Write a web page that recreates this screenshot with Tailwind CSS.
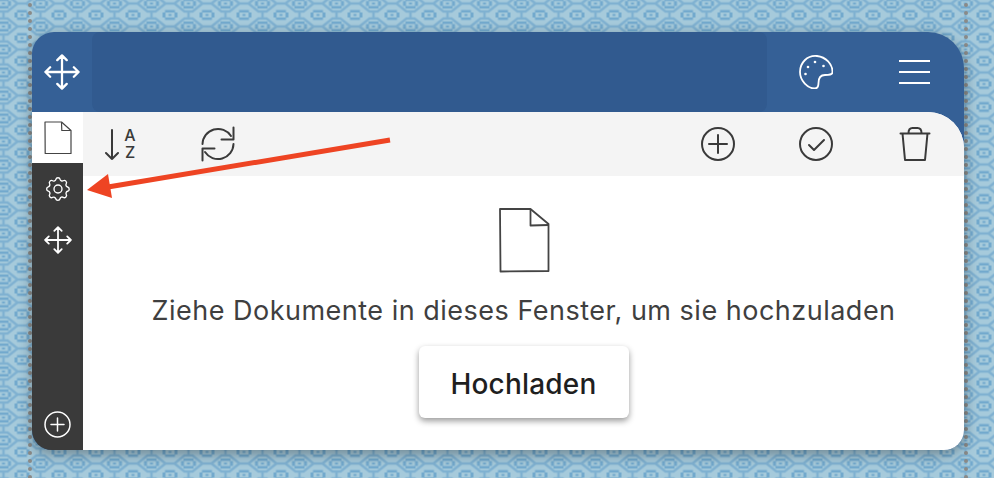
<!DOCTYPE html>
<html>
<head>
  <meta charset="UTF-8" />
  <title>Dokumente</title>
  <script src="https://cdn.jsdelivr.net/npm/@tailwindcss/browser@4"></script>
</head>
<body class="bg-[#a6cadb] font-['Inter',sans-serif] overflow-hidden">
  <div class="relative w-[994px] h-[478px] overflow-hidden pt-8 px-8">
    <!-- wallpaper -->
    <svg class="absolute inset-0" width="994" height="478">
      <defs>
        <g id="motif" fill="#72a9cd">
          <path d="M-5 -5h10v2.500h-10zM-5 2.500h10v2.500h-10zM-7.500 -2.500h3v5h-3zM4.500 -2.500h3v5h-3z" />
          <path d="M-1.500 -1h3v2h-3z" />
        </g>
        <pattern id="tile" width="37" height="23" patternUnits="userSpaceOnUse" patternTransform="translate(3.500 3.500)">
          <path d="M0 8h4L14 0h9L33 8h4M0 15h4L14 23h9L33 15h4M0 8v7M37 8v7" fill="none" stroke="#7fb1d1" stroke-width="2.500" />
          <use href="#motif" x="18.500" y="11.500" />
          <use href="#motif" x="0" y="0" />
          <use href="#motif" x="37" y="0" />
          <use href="#motif" x="0" y="23" />
          <use href="#motif" x="37" y="23" />
        </pattern>
      </defs>
      <rect width="994" height="478" fill="url(#tile)" />
      <line x1="30" y1="5" x2="30" y2="478" stroke="#8a8a88" stroke-width="4" stroke-linecap="round" stroke-dasharray="0 8" />
      <line x1="966" y1="5" x2="966" y2="478" stroke="#8a8a88" stroke-width="4" stroke-linecap="round" stroke-dasharray="0 8" />
    </svg>

    <!-- window -->
    <div class="relative w-[932px] h-[418px] rounded-tl-[22px] rounded-tr-[36px] rounded-br-[20px] rounded-bl-[20px] overflow-hidden bg-[#356096] shadow-[0_4px_14px_rgba(0,0,0,0.35)] flex flex-col">
      <!-- title bar -->
      <div class="h-20 flex items-stretch shrink-0">
        <div class="w-[60px] flex items-center justify-center">
          <svg width="36" height="36" viewBox="0 0 38 38" fill="none" stroke="#fff" stroke-width="2.400" stroke-linecap="round" stroke-linejoin="round">
            <path d="M19 1.500v35M1.500 19h35M14 6.500l5-5 5 5M14 31.500l5 5 5-5M6.500 14l-5 5 5 5M31.500 14l5 5-5 5" />
          </svg>
        </div>
        <div class="w-[675px] bg-[#315a8f] rounded-lg"></div>
        <div class="flex-1 flex items-center">
          <svg class="ml-8" width="34" height="34" viewBox="0 0 34 34" fill="none">
            <path d="M18 1C8 0 1 8 1 17C1 26 9 33.500 15.500 33.500C19 33.500 19.500 31 19.500 28C19.500 22.500 22 20 26 20C30 20 33.500 20 33.500 17C33.500 9 27 2 18 1Z" stroke="#fff" stroke-width="1.800" />
            <circle cx="16" cy="7" r="1.300" fill="#fff" />
            <circle cx="24.500" cy="11" r="1.300" fill="#fff" />
            <circle cx="9" cy="12" r="1.300" fill="#fff" />
            <circle cx="6.500" cy="19" r="1.300" fill="#fff" />
          </svg>
          <div class="ml-[66px] w-[31px] h-6 flex flex-col justify-between">
            <div class="h-0.5 bg-white"></div>
            <div class="h-0.5 bg-white"></div>
            <div class="h-0.5 bg-white"></div>
          </div>
        </div>
      </div>

      <!-- body -->
      <div class="flex-1 flex min-h-0">
        <!-- side rail -->
        <div class="w-[51px] bg-[#3a3a3a] flex flex-col items-center shrink-0">
          <div class="w-full h-[51px] bg-white flex items-center justify-center">
            <svg width="28" height="33" viewBox="0 0 28 33" fill="none" stroke="#444" stroke-width="1.200" stroke-linejoin="round">
              <path d="M1 1h16.500L27 9.500v23H1.200Z" />
              <path d="M17.500 1.300l.3 8.200h9" />
            </svg>
          </div>
          <svg class="mt-[11px]" width="30" height="30" viewBox="0 0 24 24" fill="none" stroke="#fff" stroke-width="1.100" stroke-linejoin="round">
            <path d="M10.300 2.800c.4-1.700 3-1.700 3.400 0 .3 1.100 1.500 1.600 2.500 1.100 1.500-.9 3.300.9 2.400 2.400-.6 1-.1 2.300 1.100 2.600 1.700.4 1.700 3 0 3.400-1.100.3-1.600 1.500-1.100 2.500.9 1.500-.9 3.300-2.400 2.400-1-.6-2.300-.1-2.600 1.100-.4 1.700-3 1.700-3.400 0-.3-1.100-1.500-1.600-2.500-1.100-1.500.9-3.300-.9-2.400-2.400.6-1 .1-2.300-1.100-2.600-1.700-.4-1.700-3 0-3.400 1.100-.3 1.600-1.500 1.100-2.500-.9-1.500.9-3.300 2.400-2.400 1 .6 2.300.1 2.600-1.100Z" transform="translate(0 1.500)" />
            <circle cx="12" cy="12" r="3.200" />
          </svg>
          <svg class="mt-[22px]" width="28" height="28" viewBox="0 0 38 38" fill="none" stroke="#fff" stroke-width="2.400" stroke-linecap="round" stroke-linejoin="round">
            <path d="M19 1.500v35M1.500 19h35M14 6.500l5-5 5 5M14 31.500l5 5 5-5M6.500 14l-5 5 5 5M31.500 14l5 5-5 5" />
          </svg>
          <svg class="mt-auto mb-3" width="27" height="27" viewBox="0 0 27 27" fill="none" stroke="#fff" stroke-width="1.500" stroke-linecap="round">
            <circle cx="13.500" cy="13.500" r="12.500" />
            <path d="M13.500 7v13M7 13.500h13" />
          </svg>
        </div>

        <!-- panel -->
        <div class="flex-1 bg-white rounded-tr-[36px] overflow-hidden flex flex-col min-w-0">
          <!-- toolbar -->
          <div class="h-16 bg-[#f4f4f4] flex items-center shrink-0 text-[#3a3a3a]">
            <div class="ml-[21px] w-[34px] flex items-center justify-between">
              <svg width="16" height="32" viewBox="0 0 16 32" fill="none" stroke="#3a3a3a" stroke-width="2" stroke-linecap="round" stroke-linejoin="round">
                <path d="M8 2v29M2 25l6 6 6-6" />
              </svg>
              <div class="w-3 flex flex-col items-center text-[16px] leading-[17px] font-medium mr-0.5">
                <span>A</span>
                <span>Z</span>
              </div>
            </div>
            <svg class="ml-[63px]" width="34" height="36" viewBox="0 0 34 36" fill="none" stroke="#3a3a3a" stroke-width="2" stroke-linecap="round" stroke-linejoin="round">
              <path d="M1.500 18A15.500 15.500 0 0 1 30 10M32.500 18A15.500 15.500 0 0 1 4 26" />
              <path d="M32.500 1.500v12h-12M1.500 34.500v-12h12" />
            </svg>
            <svg class="ml-auto" width="34" height="34" viewBox="0 0 34 34" fill="none" stroke="#3a3a3a" stroke-width="2" stroke-linecap="round">
              <circle cx="17" cy="17" r="16" />
              <path d="M17 8v18M8 17h18" />
            </svg>
            <svg class="ml-16" width="34" height="34" viewBox="0 0 34 34" fill="none" stroke="#3a3a3a" stroke-width="2" stroke-linecap="round" stroke-linejoin="round">
              <circle cx="17" cy="17" r="16" />
              <path d="M10 18l5 5 10-10" />
            </svg>
            <svg class="ml-[66px] mr-[33px]" width="32" height="36" viewBox="0 0 32 36" fill="none" stroke="#3a3a3a" stroke-width="2" stroke-linecap="round" stroke-linejoin="round">
              <path d="M1.500 7.500h29M3.500 7.500l2.500 26.500h20l2.500-26.500M9.500 7c0-4 2-5 4-5h5c2 0 4 1 4 5" />
            </svg>
          </div>

          <!-- empty state -->
          <div class="flex-1 flex flex-col items-center pt-[31px]">
            <svg width="52" height="66" viewBox="0 0 52 66" fill="none" stroke="#444" stroke-width="1.800" stroke-linejoin="round">
              <path d="M2 2h30.500L50.500 17v47L2.500 64.500Z" />
              <path d="M32.500 2v16.500L50.500 18" />
            </svg>
            <p class="mt-[23px] text-[27px] leading-[30px] text-[#3f3f3f] tracking-[0.5px] whitespace-nowrap">Ziehe Dokumente in dieses Fenster, um sie hochzuladen</p>
            <button class="mt-5 w-[210px] h-[72px] pt-1 bg-white rounded-md text-[28px] font-medium text-[#1f1f1f] tracking-[0.2px] shadow-[0_3px_6px_rgba(0,0,0,0.4)]">Hochladen</button>
          </div>
        </div>
      </div>
    </div>

    <!-- annotation arrow -->
    <svg class="absolute left-0 top-0" width="994" height="478">
      <path d="M390 140L108 187" stroke="#ee4423" stroke-width="5" />
      <path d="M87 190L108 174L112 198Z" fill="#ee4423" />
    </svg>
  </div>
</body>
</html>
